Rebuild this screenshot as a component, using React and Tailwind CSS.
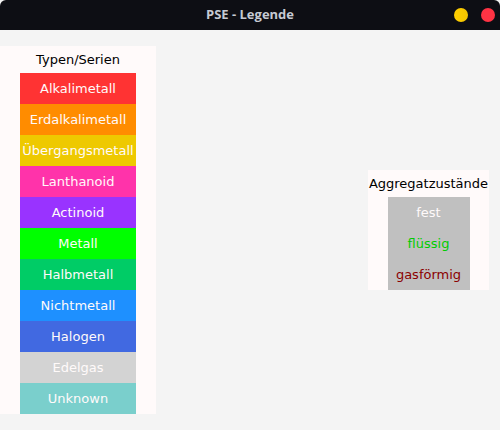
import React from 'react';

const types = [
  { name: 'Alkalimetall', bg: 'bg-[#ff3333]' },
  { name: 'Erdalkalimetall', bg: 'bg-[#ff8c00]' },
  { name: 'Übergangsmetall', bg: 'bg-[#eec900]' },
  { name: 'Lanthanoid', bg: 'bg-[#ff33aa]' },
  { name: 'Actinoid', bg: 'bg-[#9933ff]' },
  { name: 'Metall', bg: 'bg-[#00ff00]' },
  { name: 'Halbmetall', bg: 'bg-[#00cc66]' },
  { name: 'Nichtmetall', bg: 'bg-[#1e90ff]' },
  { name: 'Halogen', bg: 'bg-[#4169e1]' },
  { name: 'Edelgas', bg: 'bg-[#d3d3d3]' },
  { name: 'Unknown', bg: 'bg-[#7acfcc]' },
];

const states = [
  { name: 'fest', color: 'text-[#fffafa]' },
  { name: 'flüssig', color: 'text-[#00cc00]' },
  { name: 'gasförmig', color: 'text-[#8b0000]' },
];

export default function App() {
  return (
    <div className="w-[500px] h-[430px] flex flex-col bg-[#f4f4f4] font-['DejaVu_Sans',sans-serif] text-[13px]">
      {/* Title bar */}
      <div className="h-[30px] bg-[#0d0e14] flex items-center justify-center relative rounded-t-[6px]">
        <span className="font-['Open_Sans',sans-serif] font-bold text-[13px] text-[#c5cad3]">PSE - Legende</span>
        <div className="absolute right-[5px] top-0 h-[30px] flex items-center gap-[13px]">
          <div className="w-[14px] h-[14px] rounded-full bg-gradient-to-r from-[#ffd000] to-[#f5c400]" />
          <div className="w-[14px] h-[14px] rounded-full bg-[#ff3344]" />
        </div>
      </div>

      {/* Content */}
      <div className="flex-1 flex items-center justify-between pr-[11px]">
        <div className="bg-[#fffafa] w-[156px] px-[20px] flex flex-col">
          <div className="h-[27px] flex items-center justify-center text-black">Typen/Serien</div>
          {types.map((t) => (
            <div key={t.name} className={`h-[31px] flex items-center justify-center text-[#fffafa] ${t.bg}`}>
              {t.name}
            </div>
          ))}
        </div>

        <div className="bg-[#fffafa] w-[121px] flex flex-col items-center">
          <div className="h-[27px] flex items-center justify-center text-black whitespace-nowrap">Aggregatzustände</div>
          <div className="w-[82px] bg-[#c0c0c0] flex flex-col">
            {states.map((s) => (
              <div key={s.name} className={`h-[31px] flex items-center justify-center ${s.color}`}>
                {s.name}
              </div>
            ))}
          </div>
        </div>
      </div>
    </div>
  );
}
